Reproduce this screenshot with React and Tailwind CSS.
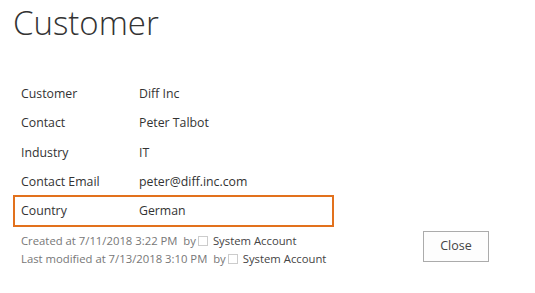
export default function App() {
  const rows = [
    ["Customer", "Diff Inc"],
    ["Contact", "Peter Talbot"],
    ["Industry", "IT"],
    ["Contact Email", "peter@diff.inc.com"],
  ];
  const font = { fontFamily: '"Open Sans", "Noto Sans", sans-serif' };
  return (
    <div className="w-[535px] h-[293px] bg-white relative overflow-hidden" style={font}>
      <h1 className="pl-[13px] text-[33px] leading-[46px] font-light text-[#333]">Customer</h1>
      <div className="pl-[13px] pt-[32px] w-[334px]">
        {rows.map(([k, v]) => (
          <div key={k} className="flex h-[29.3px] items-center pl-[8px] pt-[3px] text-[12.3px] text-[#333]">
            <div className="w-[118px]">{k}</div>
            <div>{v}</div>
          </div>
        ))}
        <div className="flex h-[32px] items-center pl-[6px] pt-[1px] border-2 border-[#e2711d] text-[12.3px] text-[#333]">
          <div className="w-[118px]">Country</div>
          <div>German</div>
        </div>
      </div>
      <div className="flex justify-between items-start pl-[21px] pr-[46px] pt-[4px]">
        <div className="text-[11.3px] leading-[18px] text-[#777] pt-[1px]">
          <div className="flex items-center">
            Created at 7/11/2018 3:22 PM&nbsp;&nbsp;by
            <span className="inline-block w-[10px] h-[10px] border border-[#ccc] mx-[2px]"></span>
            <span className="text-[#444] ml-[3px]">System Account</span>
          </div>
          <div className="flex items-center">
            Last modified at 7/13/2018 3:10 PM&nbsp;&nbsp;by
            <span className="inline-block w-[10px] h-[10px] border border-[#ccc] mx-[2px]"></span>
            <span className="text-[#444] ml-[3px]">System Account</span>
          </div>
        </div>
        <button className="w-[66px] h-[31px] border border-[#ababab] bg-[#fdfdfd] text-[12.5px] text-[#444]">Close</button>
      </div>
    </div>
  );
}
